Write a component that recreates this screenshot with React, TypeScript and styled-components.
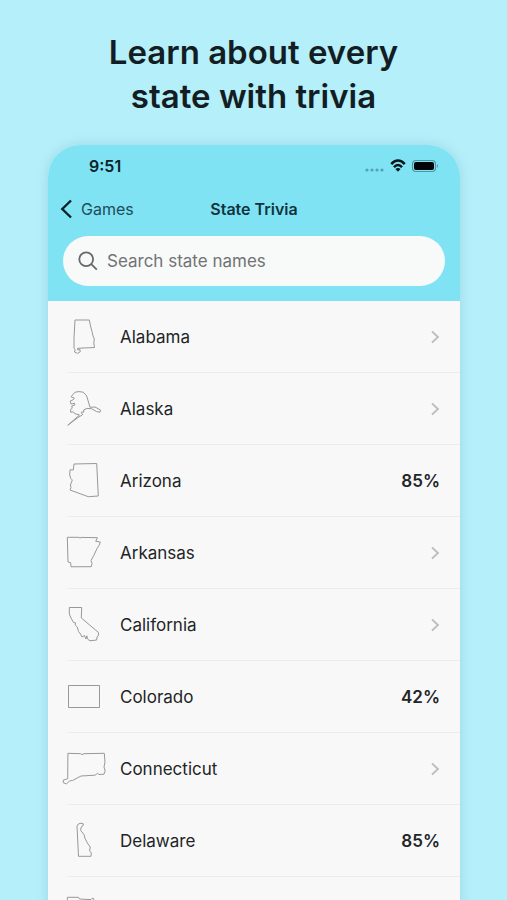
import React from "react";
import styled, { createGlobalStyle } from "styled-components";

const GlobalStyle = createGlobalStyle`
  * { box-sizing: border-box; }
  body {
    margin: 0;
    background: #b5effa;
    font-family: Inter, "Liberation Sans", sans-serif;
    color: #222426;
  }
`;

const Page = styled.main`
  display: flex;
  flex-direction: column;
  height: 100vh;
  overflow: hidden;
`;

const Headline = styled.h1`
  margin: 0 auto;
  padding: 30px 0 27px;
  max-width: 340px;
  text-align: center;
  font-size: 33px;
  line-height: 44px;
  font-weight: 600;
  color: #131e24;
`;

const Phone = styled.section`
  flex: none;
  margin: 0 47px 0 48px;
  border-radius: 32px 32px 0 0;
  overflow: hidden;
  background: #f8f8f8;
  box-shadow: 0 0 12px rgba(60, 130, 150, 0.22);
`;

const Header = styled.header`
  background: #7fe3f4;
  padding: 0 15px 15px;
`;

const StatusBar = styled.div`
  display: flex;
  align-items: center;
  height: 42px;
  padding: 0 5px 0 26px;
`;

const Clock = styled.time`
  flex: 1;
  font-size: 16px;
  line-height: 20px;
  font-weight: 600;
  color: #0b2229;
`;

const NavBar = styled.nav`
  display: grid;
  grid-template-columns: 1fr auto 1fr;
  align-items: center;
  height: 44px;
  margin: 0 -3px 5px;
`;

const BackLink = styled.a`
  display: flex;
  align-items: center;
  gap: 8px;
  font-size: 16px;
  line-height: 22px;
  color: #1e4c58;
  text-decoration: none;
`;

const Title = styled.h2`
  margin: 0;
  font-size: 16px;
  line-height: 22px;
  font-weight: 600;
  color: #12333d;
`;

const SearchField = styled.label`
  display: flex;
  align-items: center;
  gap: 9px;
  height: 50px;
  padding: 0 15px;
  border-radius: 25px;
  background: #f8f9f9;
`;

const SearchInput = styled.input`
  flex: 1;
  min-width: 0;
  border: 0;
  padding: 0;
  outline: 0;
  background: transparent;
  font: inherit;
  font-size: 17px;
  line-height: 22px;
  color: #222426;
  &::placeholder {
    color: #717374;
    opacity: 1;
  }
`;

const StateList = styled.ul`
  list-style: none;
  margin: 0;
  padding: 0;
`;

const StateItem = styled.li`
  background: linear-gradient(#ebecec, #ebecec) 20px 100% / 100% 1px no-repeat;
`;

const StateLink = styled.a`
  display: flex;
  align-items: center;
  height: 72px;
  padding: 0 20px 0 14px;
  color: inherit;
  text-decoration: none;
`;

const StateName = styled.span`
  flex: 1;
  margin-left: 14px;
  font-size: 17px;
  line-height: 22px;
`;

const Score = styled.span`
  font-size: 17px;
  line-height: 22px;
  font-weight: 600;
`;

const Outline = styled.svg`
  flex: none;
  fill: none;
  stroke: #969999;
  stroke-width: 1;
  stroke-linejoin: round;
`;

type StateEntry = { name: string; shape: string; score?: string };

const states: StateEntry[] = [
  {
    name: "Alabama",
    shape:
      "M13 7H27.3L28.5 13L30 18.5L31 23L32.3 26L31.8 30L32.5 34.5L15.5 35.3L15.8 37L18 36.5L18.2 38.8L15.5 40.4L12.5 39L13.2 36.5L12 35.5L12 25Z",
  },
  {
    name: "Alaska",
    shape:
      "M13 7.2L17 6.6L21.3 7.2L24.7 11L28 22.3L33 22L38.5 25L38 27.3L34.5 26.5L29.7 23.7L25 23.4L21.5 25L22 27L19.3 27.2L20.5 29.8L16 32.5L5.7 40.3L14 33L17.5 30L13 28.7L11 26.8L8.7 27.3L8.5 25L10.2 23L9.8 21L12.8 20L12.5 18.3L9 19L8.2 16L11.5 14.6L12.3 13L9 11.8Z",
  },
  {
    name: "Arizona",
    shape:
      "M12 7L34.7 6.5L36.3 39L26.3 39.7L8 33L9 30.5L8.4 28L10.3 23L8.8 21.5L7.7 18L8 12.8L11.3 13Z",
    score: "85%",
  },
  {
    name: "Arkansas",
    shape:
      "M5.3 8.3L17 8.3L18 9.2L19 8.4L35.4 8.7L33.7 12.3L38.3 13L37 16.5L35 19.5L31.8 26.5L29 31.5L30 34.5L29.3 37.7L9 37.8L8.7 33.7L6 33Z",
  },
  {
    name: "California",
    shape:
      "M7.3 6.5H19.7L19.3 17L36.3 31.3L36.7 34L35 36L34.7 39L28 39.8L25.5 38L24.8 34.8L23.8 38L22.5 34.5L20 36L18.5 33L16.5 30.5L15.3 26L13.2 24L13.5 21.8L11.5 21.5L9 17L7.3 13Z",
  },
  { name: "Colorado", shape: "M6.5 12.5H37.5V34.5H6.5Z", score: "42%" },
  {
    name: "Connecticut",
    shape:
      "M5.9 8.3L18.5 8.7L20 9.6L22 8.7L42.3 8.3L43 17L42 22L43.2 26L42 29.2L37 29.5L35.5 28.3L33 30.2L19 31L10.5 35.5L7.5 36L4.5 38.8L1.3 37.8L1.3 35L5.7 33.8Z",
  },
  {
    name: "Delaware",
    shape:
      "M16.3 7L19 6.2L21.3 6.8L20.8 9L19 10.3L18.7 13.5L22 17.5L23 21.5L26 27L28.3 30L27.5 34L29.3 35.5L29 39.3H16.5L15 9Z",
    score: "85%",
  },
  {
    name: "Florida",
    shape:
      "M5.3 8.3H16.5L17.5 10L29 10.6L30 9.4H31.5L34 18L38.5 26L38.3 34L35.5 37L30 30L26 24L25.5 18L20 13.5L15 15.8L11 12.6L5.5 13Z",
  },
];

const Chevron = () => (
  <svg width="10" height="14" viewBox="0 0 10 14" fill="none" aria-hidden="true">
    <path d="M2 1.5L8 7L2 12.5" stroke="#bcbebe" strokeWidth="1.8" />
  </svg>
);

const StatusIcons = () => (
  <svg width="76" height="16" viewBox="0 0 76 16" role="img" aria-label="Wi-Fi on, battery full">
    <g fill="#52a4b3">
      <circle cx="3" cy="12" r="1.6" />
      <circle cx="8" cy="12" r="1.6" />
      <circle cx="13" cy="12" r="1.6" />
      <circle cx="18" cy="12" r="1.6" />
    </g>
    <g fill="none" stroke="#07151a" strokeWidth="2.5">
      <path d="M27.3 6.1C31.2 1.4 36.8 1.4 40.7 6.1" />
      <path d="M30 9.2C32.2 6.4 35.8 6.4 38 9.2" />
    </g>
    <path d="M34 13.8L31.4 10.9Q34 8.9 36.6 10.9Z" fill="#07151a" />
    <rect x="48.5" y="2.5" width="23" height="11" rx="3.5" fill="none" stroke="#52959f" strokeWidth="1.2" />
    <rect x="50" y="4" width="20" height="8" rx="2" fill="#020608" />
    <path d="M73 6Q75 8 73 10Z" fill="#52959f" />
  </svg>
);

export default function App() {
  return (
    <>
      <GlobalStyle />
      <Page>
        <Headline>
          Learn about every
          <br />
          state with trivia
        </Headline>
        <Phone>
          <Header>
            <StatusBar>
              <Clock>9:51</Clock>
              <StatusIcons />
            </StatusBar>
            <NavBar>
              <BackLink href="#games">
                <svg width="13" height="20" viewBox="0 0 13 20" fill="none" aria-hidden="true">
                  <path d="M11 1.5L2.3 10L11 18.5" stroke="#092229" strokeWidth="2.4" />
                </svg>
                Games
              </BackLink>
              <Title>State Trivia</Title>
            </NavBar>
            <SearchField>
              <svg width="20" height="20" viewBox="0 0 20 20" fill="none" stroke="#666969" strokeWidth="1.8" aria-hidden="true">
                <circle cx="8.2" cy="8.2" r="6.9" />
                <path d="M13.2 13.2L18.8 18.6" />
              </svg>
              <SearchInput type="text" aria-label="Search state names" placeholder="Search state names" />
            </SearchField>
          </Header>
          <StateList>
            {states.map(({ name, shape, score }) => (
              <StateItem key={name}>
                <StateLink href={`#${name.toLowerCase()}`}>
                  <Outline width="44" height="48" viewBox="0 0 44 48" aria-hidden="true">
                    <path d={shape} />
                  </Outline>
                  <StateName>{name}</StateName>
                  {score ? <Score>{score}</Score> : <Chevron />}
                </StateLink>
              </StateItem>
            ))}
          </StateList>
        </Phone>
      </Page>
    </>
  );
}
